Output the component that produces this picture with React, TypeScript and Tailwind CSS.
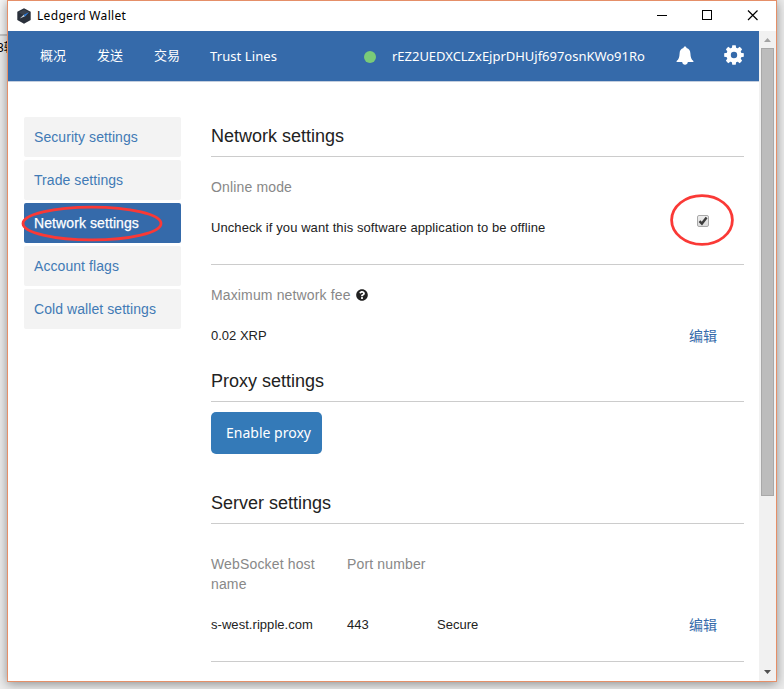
import type { ReactNode } from "react";
import { FaQuestionCircle } from "react-icons/fa";

const ARIAL = "font-['Liberation_Sans','Noto_Sans_CJK_SC',sans-serif]";
const NOTO = "font-['Noto_Sans','Noto_Sans_CJK_SC',sans-serif]";

function TitleBar() {
  return (
    <header className="flex h-[30px] shrink-0 items-center bg-white pl-[9px]">
      <svg className="mb-px" width="14" height="16" viewBox="0 0 14 16">
        <path d="M7 0.3 L13.7 3.8 V12 L7 15.7 L0.3 12 V3.8 Z" fill="#2a303b" />
        <path d="M7 1.5 L12.5 4.5 L7 7 L1.5 4.5 Z" fill="#3b424e" />
        <path d="M2.8 10.6 L6.8 6.8 L8 8.2 Z" fill="#c9d4e0" />
        <path d="M12 4.2 L6.8 6.8 L8 8.4 Z" fill="#2f7fe0" />
      </svg>
      <span className={`${NOTO} ml-[6px] w-[91px] whitespace-nowrap text-[12px] leading-[18px] tracking-[0.32px] text-black`}>
        Ledgerd Wallet
      </span>
      <svg className="mb-[2px] ml-auto mr-[16px]" width="103" height="12" viewBox="0 0 103 12" fill="none" stroke="#000" strokeWidth="1">
        <path d="M0 6.5 H10" />
        <rect x="45.5" y="1.5" width="9" height="9" />
        <path d="M91 1.5 L100.5 11 M100.5 1.5 L91 11" strokeWidth="1.2" />
      </svg>
    </header>
  );
}

function Bell() {
  return (
    <svg className="mb-px" width="18" height="19" viewBox="0 0 18 19" fill="#fff">
      <path d="M9 0.4 C10 0.4 10.5 1 10.5 1.9 C13.2 2.6 14.3 4.6 14.4 7.4 C14.6 11.2 15.2 13.2 17.4 15 V16 H0.6 V15 C2.8 13.2 3.4 11.2 3.6 7.4 C3.7 4.6 4.8 2.6 7.5 1.9 C7.5 1 8 0.4 9 0.4 Z" />
      <path d="M6.2 16 H11.8 C11.6 17.8 10.5 18.7 9 18.7 C7.5 18.7 6.4 17.8 6.2 16 Z" />
    </svg>
  );
}

const teeth = [0, 45, 90, 135, 180, 225, 270, 315];

function Gear() {
  return (
    <svg className="mb-[2px] ml-[30px]" width="20" height="20" viewBox="0 0 20 20" fill="#fff">
      <circle cx="10" cy="10" r="5.4" fill="none" stroke="#fff" strokeWidth="4.4" />
      {teeth.map((angle) => (
        <path key={angle} d="M7.7 3.4 L8.3 0.2 H11.7 L12.3 3.4 Z" transform={`rotate(${angle} 10 10)`} />
      ))}
    </svg>
  );
}

function NavBar() {
  return (
    <nav className={`${NOTO} flex h-[51px] shrink-0 items-center whitespace-nowrap border-b border-[#c3cede] bg-[#356aaa] pl-8 text-[13px] text-white`}>
      <span className="w-[57px]">概况</span>
      <span className="w-[57px]">发送</span>
      <span className="w-[56px]">交易</span>
      <span className="w-[154px] pt-px tracking-[0.09px]">Trust Lines</span>
      <span className="mt-px size-3 rounded-full bg-[#7acb78]" />
      <span className="ml-4 w-[284px] pt-px tracking-[-0.02px]">rEZ2UEDXCLZxEjprDHUjf697osnKWo91Ro</span>
      <Bell />
      <Gear />
    </nav>
  );
}

const menu = ["Security settings", "Trade settings", "Network settings", "Account flags", "Cold wallet settings"];

function Sidebar() {
  return (
    <aside className="flex w-[157px] flex-col gap-[3px]">
      {menu.map((item) => (
        <a
          key={item}
          className={
            item === "Network settings"
              ? "flex h-10 items-center rounded-[2px] bg-[#356aaa] pl-[10px] text-[14px] tracking-[0.09px] text-white [-webkit-text-stroke:0.25px_white]"
              : "flex h-10 items-center rounded-[2px] bg-[#f3f3f3] pl-[10px] text-[14px] tracking-[0.07px] text-[#417ab5]"
          }
        >
          {item}
        </a>
      ))}
    </aside>
  );
}

function Heading({ children }: { children: ReactNode }) {
  return <h2 className="h-10 border-b border-[#ccc] pt-[9px] text-[18px] leading-5 text-[#222]">{children}</h2>;
}

function EditLink() {
  return <a className="mr-[27px] text-[14px] text-[#356aaa]">编辑</a>;
}

function Checkbox() {
  return (
    <span className="mb-[15px] mr-[35px] flex size-[12px] items-center justify-center rounded-[2px] border border-[#a9a9a9] bg-linear-to-b from-[#eee] to-[#dcdcdc]">
      <svg width="10" height="10" viewBox="0 0 10 10" fill="none" stroke="#3d3d3d" strokeWidth="2.4">
        <path d="M1.5 5.2 L3.9 7.6 L8.6 1.6" />
      </svg>
    </span>
  );
}

function Settings() {
  return (
    <main className="ml-[30px] w-[533px] text-[13px] leading-5 text-[#222]">
      <Heading>Network settings</Heading>
      <section className="h-[108px] border-b border-[#ccc] pt-5">
        <h3 className="text-[14px] tracking-[0.15px] text-[#888]">Online mode</h3>
        <div className="mt-[21px] flex h-5 items-center justify-between">
          <span className="tracking-[0.085px]">Uncheck if you want this software application to be offline</span>
          <Checkbox />
        </div>
      </section>
      <section className="h-[97px] pt-5">
        <h3 className="flex items-center text-[14px] tracking-[0.14px] text-[#888]">
          Maximum network fee
          <FaQuestionCircle size={12} className="ml-[5px] text-[#222]" />
        </h3>
        <div className="mt-[21px] flex h-5 items-center justify-between">
          <span>0.02 XRP</span>
          <EditLink />
        </div>
      </section>
      <Heading>Proxy settings</Heading>
      <button className={`${NOTO} mb-[30px] mt-[10px] block h-[42px] w-[111px] whitespace-nowrap rounded-[5px] bg-[#347ab8] pl-1 text-[14px] text-white`}>
        Enable proxy
      </button>
      <Heading>Server settings</Heading>
      <section className="h-[138px] border-b border-[#ccc] pt-[30px]">
        <div className="flex h-10 text-[14px] tracking-[0.15px] text-[#888]">
          <h3 className="w-[136px] pr-5">WebSocket host name</h3>
          <h3>Port number</h3>
        </div>
        <div className="mt-[21px] flex h-5 items-center">
          <span className="w-[136px] tracking-[0.05px]">s-west.ripple.com</span>
          <span className="w-[90px]">443</span>
          <span className="flex-1">Secure</span>
          <EditLink />
        </div>
      </section>
    </main>
  );
}

function ScrollBar() {
  return (
    <div className="flex w-[17px] shrink-0 flex-col items-center justify-between bg-[#f1f1f1]">
      <svg width="17" height="17" viewBox="0 0 17 17">
        <path d="M5 11 L8.5 7 L12 11 Z" fill="#a3a3a3" />
      </svg>
      <div className="h-[448px] w-[13px] border border-[#a8a8a8] bg-[#bcbcbc]" />
      <div className="flex-1" />
      <svg width="17" height="17" viewBox="0 0 17 17">
        <path d="M5 6 H12 L8.5 10 Z" fill="#505050" />
      </svg>
    </div>
  );
}

export default function App() {
  return (
    <div className={`${ARIAL} relative h-[689px] w-[784px] overflow-hidden bg-[#ececec] pl-[7px]`}>
      <div className="absolute left-0 top-0 h-[36px] w-[7px] border-b-2 border-[#c6c6c6] bg-[#f5f5f5]" />
      <span className="absolute left-[-3px] top-[40px] whitespace-nowrap text-[12px] leading-4 text-black">3转</span>
      <div className="relative flex h-[682px] w-[770px] flex-col border border-[#e58f68] bg-white shadow-[0_2px_10px_rgba(0,0,0,0.4)]">
        <TitleBar />
        <div className="flex min-h-0 flex-1">
          <div className="flex min-w-0 flex-1 flex-col">
            <NavBar />
            <div className="flex pl-4 pt-[35px]">
              <Sidebar />
              <Settings />
            </div>
          </div>
          <ScrollBar />
        </div>
      </div>
      <svg className="absolute left-0 top-0" width="784" height="689" viewBox="0 0 784 689" fill="none" stroke="#fa3936" strokeWidth="2.8">
        <ellipse cx="92" cy="223.5" rx="69" ry="16.4" />
        <ellipse cx="702" cy="220" rx="30.4" ry="24.4" />
      </svg>
    </div>
  );
}
